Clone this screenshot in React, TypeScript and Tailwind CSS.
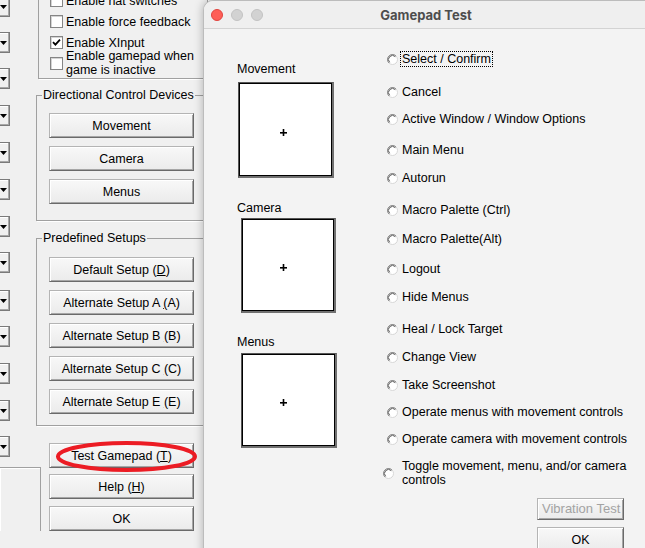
import React from "react";

const ui = "font-['Liberation_Sans',Arial,sans-serif] text-[12.5px] leading-[14px] text-black";

function Btn({ children, className = "" }: { children: React.ReactNode; className?: string }) {
  return (
    <div
      className={`h-[25px] w-[145px] flex items-center justify-center whitespace-nowrap bg-gradient-to-b from-[#f8f8f8] to-[#ebebeb] border border-t-[#b4b4b4] border-l-[#b4b4b4] border-r-[#6a6a6a] border-b-[#6a6a6a] shadow-[inset_1px_1px_0_#ffffff,inset_-1px_-1px_0_#a6a6a6] ${className}`}
    >
      {children}
    </div>
  );
}

function Check({ checked = false }: { checked?: boolean }) {
  return (
    <div className="w-[13px] h-[13px] shrink-0 bg-white border border-[#858585] shadow-[inset_1px_1px_0_#d4d4d4] flex items-center justify-center">
      {checked && (
        <svg width="9" height="9" viewBox="0 0 9 9">
          <path d="M1 4.2 L3.4 6.6 L8 1.6" stroke="#000" strokeWidth="1.8" fill="none" />
        </svg>
      )}
    </div>
  );
}

function Radio() {
  return (
    <svg width="11" height="11" viewBox="0 0 11 11" className="shrink-0">
      <circle cx="5.5" cy="5.5" r="5" fill="#fff" stroke="#d6d6d6" />
      <path d="M1.96 9.04 A5 5 0 0 1 9.04 1.96" stroke="#8c8c8c" fill="none" />
      <path d="M2.67 8.33 A4 4 0 0 1 8.33 2.67" stroke="#5a5a5a" fill="none" />
    </svg>
  );
}

function Combo({ className }: { className: string }) {
  return (
    <div
      className={`w-[10px] h-[21px] flex items-center bg-[#f0f0f0] border-t border-r border-b border-[#7a7a7a] shadow-[inset_-1px_-1px_0_#a8a8a8,inset_0_1px_0_#ffffff] ${className}`}
    >
      <svg width="7" height="4" viewBox="0 0 7 4">
        <path d="M0 0 H7 L3.5 4 Z" fill="#000" />
      </svg>
    </div>
  );
}

function Plus() {
  return (
    <svg width="7" height="7" viewBox="0 0 7 7">
      <rect x="0" y="3" width="7" height="1.6" fill="#000" />
      <rect x="2.7" y="0" width="1.6" height="7" fill="#000" />
    </svg>
  );
}

function StickBox({ className, plus }: { className: string; plus: string }) {
  return (
    <div
      className={`relative bg-white border-t border-l border-[#555555] border-r-2 border-b-2 border-r-[#707070] border-b-[#707070] ${className}`}
    >
      <div className="absolute inset-0 border border-black" />
      <div className={`absolute ${plus}`}>
        <Plus />
      </div>
    </div>
  );
}

const combos = [
  "-mt-[4px]",
  "mt-[15px]",
  "mt-[15px]",
  "mt-[16px]",
  "mt-[16px]",
  "mt-[16px]",
  "mt-[16px]",
  "mt-[15px]",
  "mt-[17px]",
  "mt-[15px]",
  "mt-[16px]",
  "mt-[16px]",
  "mt-[15px]",
];

const radios: { label: string; mt: string }[] = [
  { label: "Cancel", mt: "mt-[19px]" },
  { label: "Active Window / Window Options", mt: "mt-[13px]" },
  { label: "Main Menu", mt: "mt-[17px]" },
  { label: "Autorun", mt: "mt-[14px]" },
  { label: "Macro Palette (Ctrl)", mt: "mt-[18px]" },
  { label: "Macro Palette(Alt)", mt: "mt-[15px]" },
  { label: "Logout", mt: "mt-[16px]" },
  { label: "Hide Menus", mt: "mt-[14px]" },
  { label: "Heal / Lock Target", mt: "mt-[18px]" },
  { label: "Change View", mt: "mt-[14px]" },
  { label: "Take Screenshot", mt: "mt-[14px]" },
  { label: "Operate menus with movement controls", mt: "mt-[13px]" },
  { label: "Operate camera with movement controls", mt: "mt-[13px]" },
];

export default function App() {
  return (
    <div className={`relative w-[645px] h-[548px] overflow-hidden bg-[#f0f0f0] flex ${ui}`}>
      {/* combo column */}
      <div className="w-[36px] shrink-0 flex flex-col">
        {combos.map((c, i) => (
          <Combo key={i} className={c} />
        ))}
        <div className="mt-[10px] w-[41px] h-[64px] shrink-0 border-t border-r border-[#a0a0a0] shadow-[inset_1px_1px_0_#ffffff]" />
      </div>

      {/* main left column */}
      <div className="w-[172px] shrink-0 flex flex-col">
        <div className="ml-[2px] -mt-[24px] h-[103px] shrink-0 border-l border-r border-b border-[#a0a0a0] shadow-[1px_1px_0_#ffffff] flex flex-col pt-[14px] pl-[11px]">
          <div className="h-[21px] flex items-center gap-[3px]">
            <Check />
            <span>Enable hat switches</span>
          </div>
          <div className="h-[21px] flex items-center gap-[3px]">
            <Check />
            <span>Enable force feedback</span>
          </div>
          <div className="h-[21px] flex items-center gap-[3px]">
            <Check checked />
            <span>Enable XInput</span>
          </div>
          <div className="-mt-[4px] flex items-center gap-[3px]">
            <Check />
            <span>
              Enable gamepad when
              <br />
              game is inactive
            </span>
          </div>
        </div>

        <fieldset className="mt-[9px] border border-[#a0a0a0] shadow-[1px_1px_0_#ffffff] pb-[16px]">
          <legend className="ml-[5px] px-[1px]">Directional Control Devices</legend>
          <Btn className="mt-[11px] ml-[12px]">Movement</Btn>
          <Btn className="mt-[8px] ml-[12px]">Camera</Btn>
          <Btn className="mt-[8px] ml-[12px]">Menus</Btn>
        </fieldset>

        <fieldset className="mt-[10px] border border-[#a0a0a0] shadow-[1px_1px_0_#ffffff] pb-[11px]">
          <legend className="ml-[5px] px-[1px]">Predefined Setups</legend>
          <Btn className="mt-[12px] ml-[12px]">
            <span>
              Default Setup (<span className="underline">D</span>)
            </span>
          </Btn>
          <Btn className="mt-[8px] ml-[12px]">
            <span>
              Alternate Setup A <span className="underline">(</span>A)
            </span>
          </Btn>
          <Btn className="mt-[8px] ml-[12px]">
            <span>
              Alternate Setup B <span className="underline">(</span>B)
            </span>
          </Btn>
          <Btn className="mt-[8px] ml-[12px]">
            <span>
              Alternate Setup C <span className="underline">(</span>C)
            </span>
          </Btn>
          <Btn className="mt-[8px] ml-[12px]">
            <span>
              Alternate Setup E <span className="underline">(</span>E)
            </span>
          </Btn>
        </fieldset>

        <Btn className="mt-[17px] ml-[13px]">
          <span>
            Test Gamepad (<span className="underline">T</span>)
          </span>
        </Btn>
        <Btn className="mt-[6px] ml-[13px]">
          <span>
            Help (<span className="underline">H</span>)
          </span>
        </Btn>
        <Btn className="mt-[7px] ml-[13px]">OK</Btn>
      </div>

      {/* red annotation ellipse */}
      <svg className="absolute left-[55px] top-[440px]" width="143" height="33" viewBox="0 0 143 33">
        <ellipse cx="71.5" cy="16.5" rx="68.5" ry="13.5" fill="none" stroke="#ec1c24" strokeWidth="4" />
      </svg>

      {/* Gamepad Test dialog */}
      <div className="absolute left-[203px] top-0 w-[445px] h-[560px] rounded-tl-[10px] overflow-hidden bg-[#f3f3f3] border-l border-t border-[#bcbcbc] shadow-[0_0_10px_rgba(0,0,0,0.28)] flex flex-col">
        <div className="h-[28px] shrink-0 border-b border-[#d3d3d3] bg-[#efefef] grid grid-cols-[1fr_auto_1fr] items-center">
          <div className="flex items-center gap-[8px] pl-[7px]">
            <div className="w-[12px] h-[12px] rounded-full bg-[#fe5f57] border border-[#e0443e]" />
            <div className="w-[12px] h-[12px] rounded-full bg-[#d2d2d2] border border-[#c2c2c2]" />
            <div className="w-[12px] h-[12px] rounded-full bg-[#d2d2d2] border border-[#c2c2c2]" />
          </div>
          <div className="font-['Inter',sans-serif] font-bold text-[13px] leading-[16px] text-[#4d4d4d]">
            Gamepad Test
          </div>
          <div />
        </div>

        <div className="flex pl-[33px]">
          <div className="w-[150px] shrink-0 flex flex-col">
            <div className="mt-[33px]">Movement</div>
            <StickBox className="mt-[6px] ml-[1px] w-[96px] h-[96px]" plus="left-[41px] top-[46px]" />
            <div className="mt-[23px]">Camera</div>
            <StickBox className="mt-[3px] ml-[4px] w-[95px] h-[95px]" plus="left-[38px] top-[45px]" />
            <div className="mt-[22px]">Menus</div>
            <StickBox className="mt-[4px] ml-[4px] w-[96px] h-[95px]" plus="left-[38px] top-[45px]" />
          </div>

          <div className="flex-1 flex flex-col">
            <div className="mt-[23px] h-[14px] flex items-center gap-[4px]">
              <Radio />
              <span className="-ml-[2px] px-[1px] border border-dotted border-black leading-[14px] whitespace-nowrap">
                Select / Confirm
              </span>
            </div>
            {radios.map((r) => (
              <div key={r.label} className={`${r.mt} h-[14px] flex items-center gap-[4px] whitespace-nowrap`}>
                <Radio />
                <span>{r.label}</span>
              </div>
            ))}
            <div className="mt-[13px] -ml-[4px] flex items-center gap-[8px]">
              <Radio />
              <span>
                Toggle movement, menu, and/or camera
                <br />
                controls
              </span>
            </div>
            <div className="mt-[11px] ml-[150px] w-[87px] h-[22px] flex items-center pl-[4px] overflow-hidden whitespace-nowrap text-[#a3a3a3] text-[13px] bg-gradient-to-b from-[#f8f8f8] to-[#ebebeb] border border-t-[#b4b4b4] border-l-[#b4b4b4] border-r-[#6a6a6a] border-b-[#6a6a6a] shadow-[inset_1px_1px_0_#ffffff,inset_-1px_-1px_0_#a6a6a6]">
              Vibration Test
            </div>
            <div className="mt-[7px] ml-[150px] w-[87px] h-[25px] flex items-center justify-center bg-gradient-to-b from-[#f8f8f8] to-[#ebebeb] border border-t-[#b4b4b4] border-l-[#b4b4b4] border-r-[#6a6a6a] border-b-[#6a6a6a] shadow-[inset_1px_1px_0_#ffffff,inset_-1px_-1px_0_#a6a6a6]">
              OK
            </div>
          </div>
        </div>
      </div>
    </div>
  );
}
